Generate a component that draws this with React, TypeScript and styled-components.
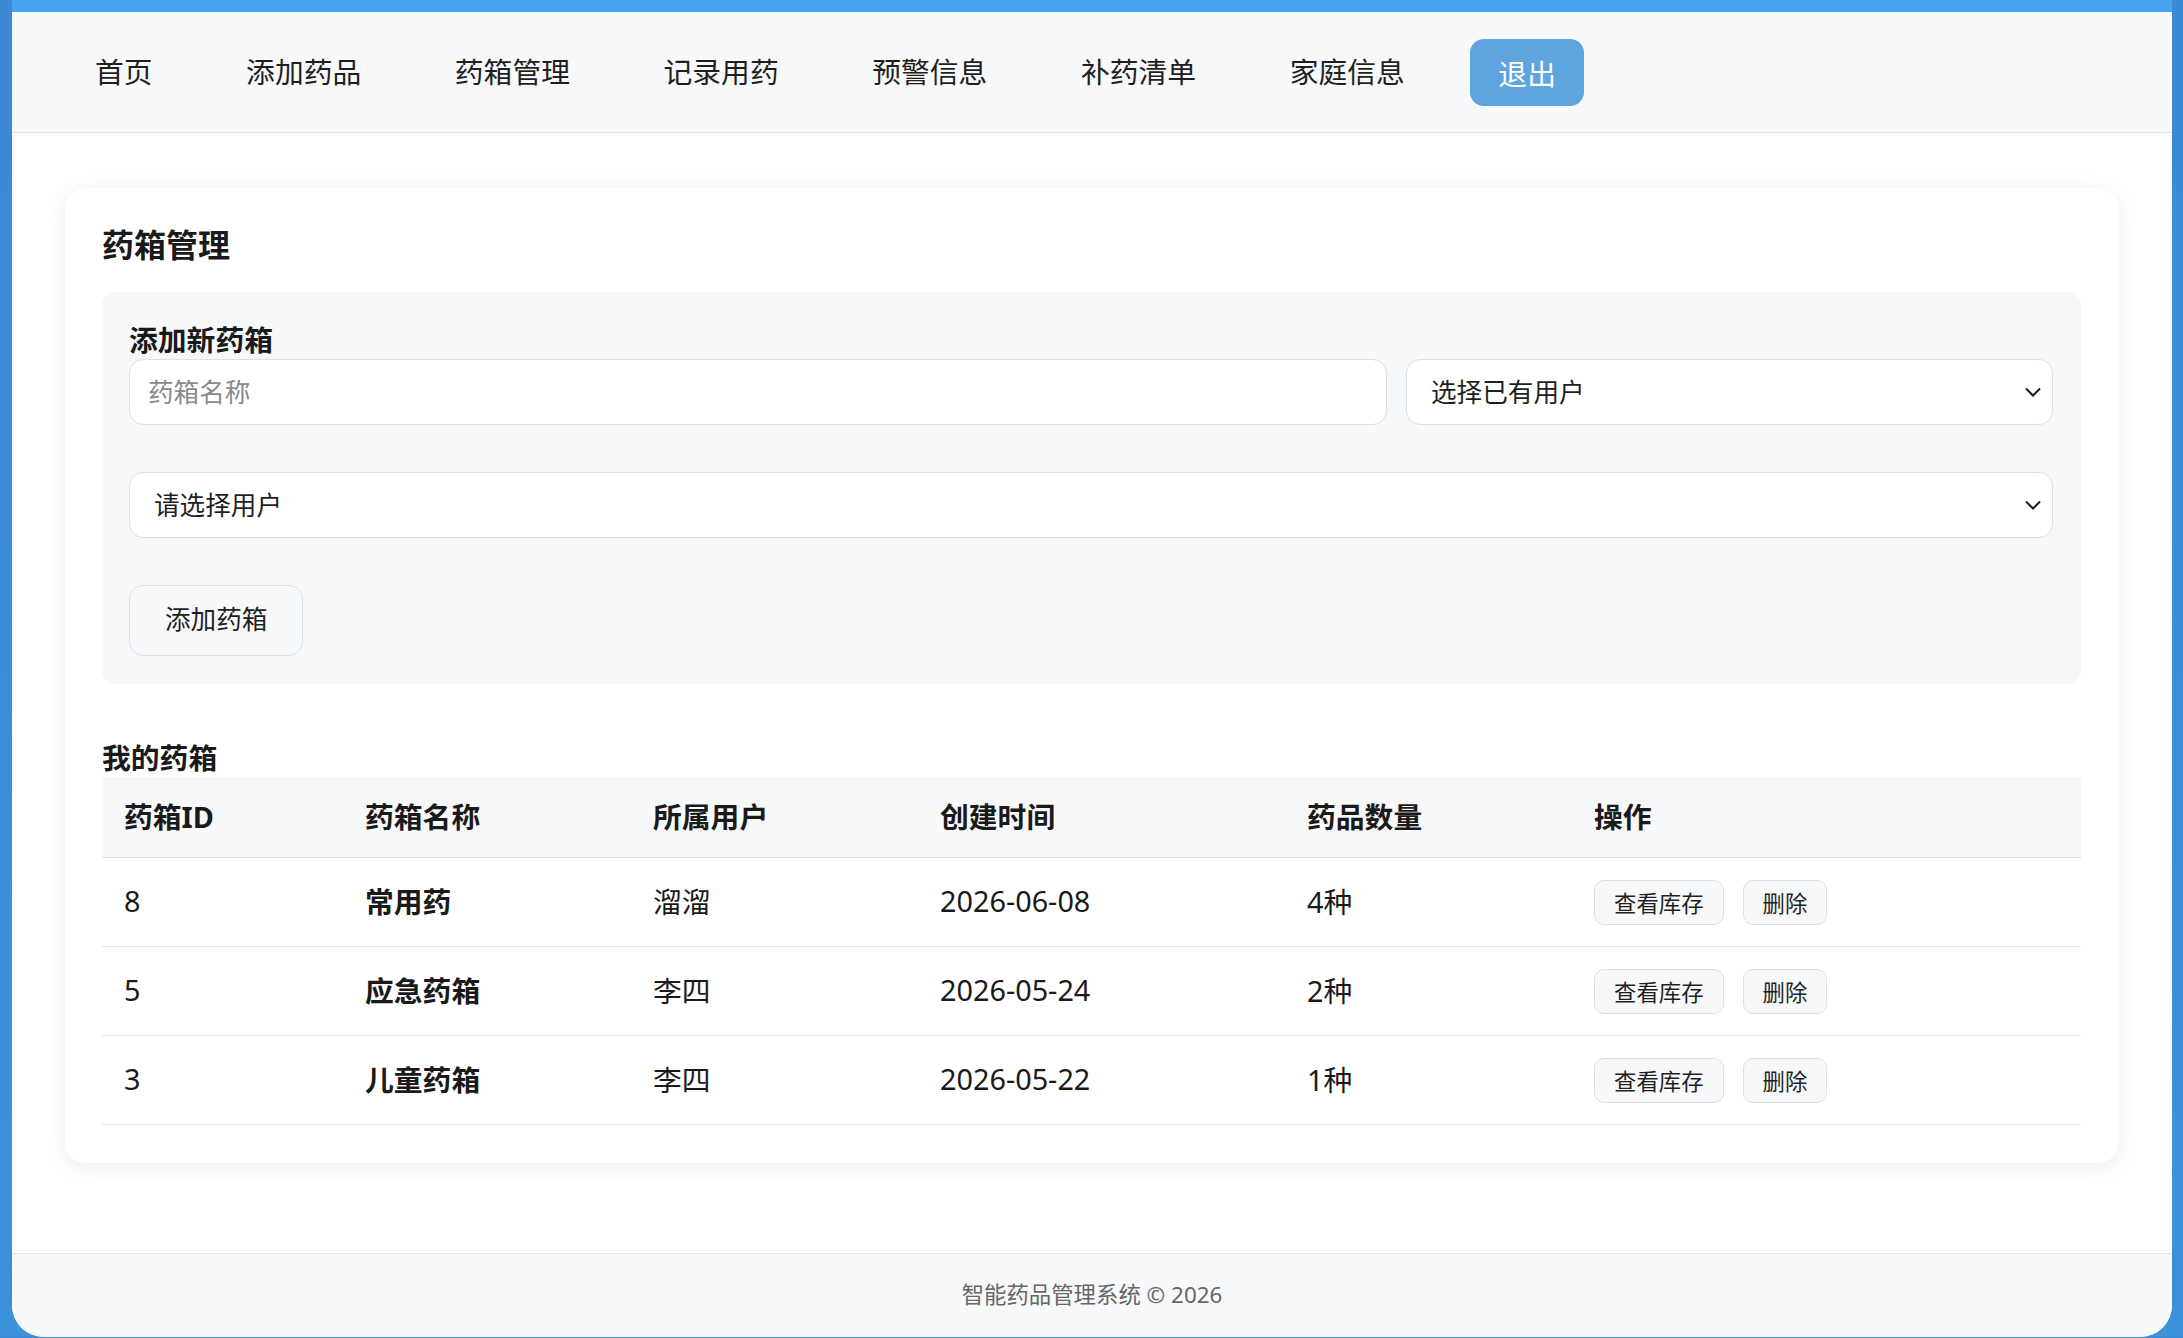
import React from 'react';
import styled, {createGlobalStyle} from "styled-components";

const GlobalStyle = createGlobalStyle`
    html, body {
        margin: 0;
        padding: 0;
    }

    body {
        background: linear-gradient(180deg, #3a8ad3 0%, #3d90da 100%);
        font-family: "Noto Sans", "Noto Sans CJK SC", sans-serif;
        color: #1f1f1f;
    }

    * {
        box-sizing: border-box;
    }
`;

const AppShell = styled.div`
    margin: 0 11px 0 12px;
    min-height: calc(100vh - 3px);
    display: flex;
    flex-direction: column;
    background: #ffffff;
    border-top: 12px solid #45a3ef;
    border-radius: 0 0 32px 32px;
    overflow: hidden;
`;

const Header = styled.header`
    height: 121px;
    flex-shrink: 0;
    display: flex;
    align-items: center;
    gap: 37.5px;
    padding-left: 55px;
    background: #f7f8fa;
    border-bottom: 1px solid #e1e3e6;
`;

const NavItem = styled.a`
    padding: 0 28px;
    font-size: 28.8px;
    line-height: 1.2;
    color: #1f1f1f;
    text-decoration: none;
    cursor: pointer;
`;

const LogoutButton = styled.button`
    height: 67px;
    padding: 0 28px;
    border: none;
    border-radius: 14px;
    background: #5ea4df;
    color: #ffffff;
    font-family: inherit;
    font-size: 28.8px;
    cursor: pointer;
`;

const Main = styled.main`
    flex: 1;
    padding: 55px 54px 90px 53px;
`;

const Card = styled.section`
    background: #ffffff;
    border-radius: 20px;
    padding: 38px 37px;
    box-shadow: 0 4px 22px rgba(0, 0, 0, 0.07);
`;

const PageTitle = styled.h2`
    margin: 0 0 28px;
    font-size: 32px;
    line-height: 38px;
    font-weight: 700;
    color: #1a1a1a;
`;

const FormPanel = styled.div`
    background: #f7f8fa;
    border-radius: 14px;
    padding: 30px 28px 28px 27px;
`;

const SectionTitle = styled.h3<{ $gapTop?: number }>`
    margin: ${p => p.$gapTop ?? 0}px 0 1px;
    font-size: 28.8px;
    line-height: 36px;
    font-weight: 700;
    color: #1a1a1a;
`;

const FormStack = styled.div`
    display: flex;
    flex-direction: column;
    align-items: flex-start;
    gap: 47px;
`;

const FieldRow = styled.div`
    width: 100%;
    display: grid;
    grid-template-columns: 1fr 647px;
    gap: 19px;
`;

const TextInput = styled.input`
    width: 100%;
    height: 66px;
    padding: 0 18px;
    border: 1px solid #dcdfe3;
    border-radius: 14px;
    background: #ffffff;
    font-family: inherit;
    font-size: 25.6px;
    color: #1f1f1f;
    outline: none;

    &::placeholder {
        color: #8a8a8a;
    }
`;

const SelectWrap = styled.div`
    position: relative;
    width: 100%;
`;

const Select = styled.select`
    width: 100%;
    height: 66px;
    padding: 0 50px 0 24px;
    border: 1px solid #dcdfe3;
    border-radius: 14px;
    background: #ffffff;
    appearance: none;
    font-family: inherit;
    font-size: 25.6px;
    color: #1f1f1f;
    outline: none;
`;

const Chevron = styled.svg`
    position: absolute;
    right: 9px;
    top: 50%;
    transform: translateY(-50%);
    pointer-events: none;
`;

const GhostButton = styled.button`
    padding: 19px 35px;
    border: 1px solid #dcdfe3;
    border-radius: 14px;
    background: #f7f8fa;
    font-family: inherit;
    font-size: 25.6px;
    line-height: 1.2;
    color: #1f1f1f;
    cursor: pointer;
`;

const Table = styled.table`
    width: 100%;
    border-collapse: collapse;
    table-layout: fixed;
    font-size: 28.8px;
`;

const HeadCell = styled.th`
    height: 81px;
    padding: 0 22px 3px;
    text-align: left;
    font-weight: 700;
    background: #f7f8fa;
    border-bottom: 1px solid #dcdfe3;
    color: #1a1a1a;
`;

const Cell = styled.td<{ $strong?: boolean }>`
    height: 89px;
    padding: 0 22px 4px;
    font-weight: ${p => (p.$strong ? 700 : 400)};
    border-bottom: 1px solid #e3e5e8;
    color: #1a1a1a;
`;

const Actions = styled.div`
    display: flex;
    gap: 19px;
    padding-top: 4px;
`;

const SmallButton = styled.button`
    height: 45px;
    padding: 0 19px;
    border: 1px solid #dcdfe3;
    border-radius: 10px;
    background: #f7f8fa;
    font-family: inherit;
    font-size: 22.4px;
    color: #1f1f1f;
    cursor: pointer;
`;

const Footer = styled.footer`
    height: 84px;
    flex-shrink: 0;
    display: flex;
    align-items: center;
    justify-content: center;
    padding-bottom: 5px;
    background: #f7f8fa;
    border-top: 1px solid #e1e3e6;
    font-size: 22.4px;
    color: #666666;
`;

const navItems = ["首页", "添加药品", "药箱管理", "记录用药", "预警信息", "补药清单", "家庭信息"];

const columns = [
  {title: "药箱ID", width: 241},
  {title: "药箱名称", width: 288},
  {title: "所属用户", width: 287},
  {title: "创建时间", width: 367},
  {title: "药品数量", width: 287},
  {title: "操作", width: 509},
];

const boxes = [
  {id: 8, name: "常用药", owner: "溜溜", created: "2026-06-08", count: "4种"},
  {id: 5, name: "应急药箱", owner: "李四", created: "2026-05-24", count: "2种"},
  {id: 3, name: "儿童药箱", owner: "李四", created: "2026-05-22", count: "1种"},
];

const ChevronIcon = () => (
  <Chevron width="22" height="14" viewBox="0 0 22 14">
    <polyline points="4,3.5 11,10.5 18,3.5" fill="none" stroke="#1a1a1a" strokeWidth="2"/>
  </Chevron>
);

const App = () => {
  return (
    <>
      <GlobalStyle/>
      <AppShell>
        <Header>
          {navItems.map(item => (
            <NavItem key={item}>{item}</NavItem>
          ))}
          <LogoutButton>退出</LogoutButton>
        </Header>

        <Main>
          <Card>
            <PageTitle>药箱管理</PageTitle>

            <FormPanel>
              <SectionTitle>添加新药箱</SectionTitle>
              <FormStack>
                <FieldRow>
                  <TextInput placeholder="药箱名称"/>
                  <SelectWrap>
                    <Select defaultValue="">
                      <option value="">选择已有用户</option>
                    </Select>
                    <ChevronIcon/>
                  </SelectWrap>
                </FieldRow>
                <SelectWrap>
                  <Select defaultValue="">
                    <option value="">请选择用户</option>
                  </Select>
                  <ChevronIcon/>
                </SelectWrap>
                <GhostButton>添加药箱</GhostButton>
              </FormStack>
            </FormPanel>

            <SectionTitle $gapTop={56}>我的药箱</SectionTitle>
            <Table>
              <colgroup>
                {columns.map(c => (
                  <col key={c.title} style={{width: c.width}}/>
                ))}
              </colgroup>
              <thead>
              <tr>
                {columns.map(c => (
                  <HeadCell key={c.title}>{c.title}</HeadCell>
                ))}
              </tr>
              </thead>
              <tbody>
              {boxes.map(b => (
                <tr key={b.id}>
                  <Cell>{b.id}</Cell>
                  <Cell $strong>{b.name}</Cell>
                  <Cell>{b.owner}</Cell>
                  <Cell>{b.created}</Cell>
                  <Cell>{b.count}</Cell>
                  <Cell>
                    <Actions>
                      <SmallButton>查看库存</SmallButton>
                      <SmallButton>删除</SmallButton>
                    </Actions>
                  </Cell>
                </tr>
              ))}
              </tbody>
            </Table>
          </Card>
        </Main>

        <Footer>智能药品管理系统 © 2026</Footer>
      </AppShell>
    </>
  );
};

export default App;
